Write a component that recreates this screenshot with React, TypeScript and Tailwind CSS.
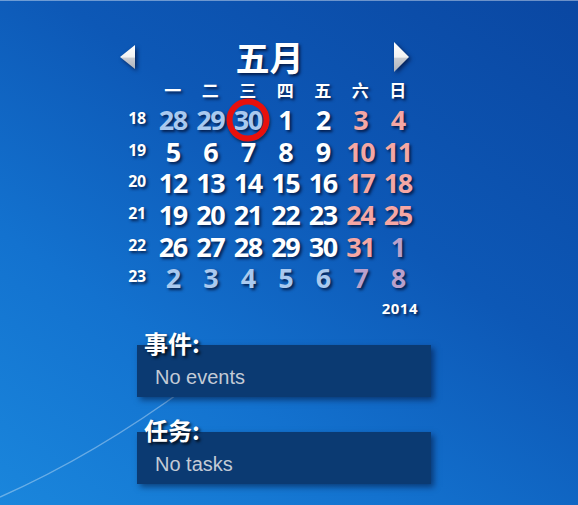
import React from "react";

type Cell = { d: string; c: string };

const W = "text-white";
const P = "text-[#f5a7a4]";
const B = "text-[#a9c9ef]";
const V = "text-[#b9a0cc]";

const rows: { wk: string; days: Cell[] }[] = [
  { wk: "18", days: [{ d: "28", c: B }, { d: "29", c: B }, { d: "30", c: B }, { d: "1", c: W }, { d: "2", c: W }, { d: "3", c: P }, { d: "4", c: P }] },
  { wk: "19", days: [{ d: "5", c: W }, { d: "6", c: W }, { d: "7", c: W }, { d: "8", c: W }, { d: "9", c: W }, { d: "10", c: P }, { d: "11", c: P }] },
  { wk: "20", days: [{ d: "12", c: W }, { d: "13", c: W }, { d: "14", c: W }, { d: "15", c: W }, { d: "16", c: W }, { d: "17", c: P }, { d: "18", c: P }] },
  { wk: "21", days: [{ d: "19", c: W }, { d: "20", c: W }, { d: "21", c: W }, { d: "22", c: W }, { d: "23", c: W }, { d: "24", c: P }, { d: "25", c: P }] },
  { wk: "22", days: [{ d: "26", c: W }, { d: "27", c: W }, { d: "28", c: W }, { d: "29", c: W }, { d: "30", c: W }, { d: "31", c: P }, { d: "1", c: V }] },
  { wk: "23", days: [{ d: "2", c: B }, { d: "3", c: B }, { d: "4", c: B }, { d: "5", c: B }, { d: "6", c: B }, { d: "7", c: V }, { d: "8", c: V }] },
];

const weekdays = ["一", "二", "三", "四", "五", "六", "日"];

function Arrow({ dir }: { dir: "left" | "right" }) {
  const id = dir === "left" ? "gl" : "gr";
  return (
    <svg width="20" height="32" viewBox="0 0 20 32" className="[filter:drop-shadow(2px_2px_2px_rgba(0,0,30,0.6))]">
      <defs>
        <linearGradient id={id} x1="0" y1="0" x2="0" y2="1">
          <stop offset="0" stopColor="#ffffff" />
          <stop offset="0.5" stopColor="#f2f2f2" />
          <stop offset="0.55" stopColor="#c9ccd2" />
          <stop offset="1" stopColor="#aeb3bb" />
        </linearGradient>
      </defs>
      {dir === "left" ? (
        <path d="M17 4 L17 28 L2 16 Z" fill={`url(#${id})`} />
      ) : (
        <path d="M3 1 L3 31 L18 16 Z" fill={`url(#${id})`} />
      )}
    </svg>
  );
}

const shadow = "[text-shadow:2px_2px_3px_rgba(0,10,40,0.75)]";
const cjk = "[font-family:'Noto_Sans_CJK_SC','Noto_Sans',sans-serif]";
const num = "[font-family:'Noto_Sans','DejaVu_Sans',sans-serif]";

export default function App() {
  return (
    <div className="relative w-[578px] h-[505px] overflow-hidden bg-[linear-gradient(215deg,#0a47a2_0%,#0d58b6_40%,#1372cf_70%,#1a86dc_100%)]">
      <div className="absolute inset-x-0 top-0 h-px bg-white/40" />
      <svg className="absolute left-0 top-0 pointer-events-none" width="578" height="505">
        <path d="M0 497 Q95 455 190 385" stroke="rgba(255,255,255,0.35)" strokeWidth="1.5" fill="none" />
      </svg>

      <div className="relative pl-[118px] pt-[36px]">
        {/* header */}
        <div className="flex w-[293px] items-center justify-between h-[42px]">
          <Arrow dir="left" />
          <div className={`${cjk} ${shadow} text-white text-[34px] font-bold leading-none ml-[10px]`}>五月</div>
          <Arrow dir="right" />
        </div>

        {/* weekday header */}
        <div className="grid grid-cols-[36px_repeat(7,37.5px)] h-[22px] items-center">
          <div />
          {weekdays.map((w) => (
            <div key={w} className={`${cjk} ${shadow} text-center text-white text-[17px] font-bold leading-none`}>
              {w}
            </div>
          ))}
        </div>

        {/* day rows */}
        <div className="flex flex-col pt-[4px]">
          {rows.map((r) => (
            <div key={r.wk} className="grid grid-cols-[36px_repeat(7,37.5px)] h-[31.6px] items-center">
              <div className={`${num} ${shadow} text-white text-[16px] font-bold leading-none text-center tracking-[-0.5px] pl-[2px] pb-[3px]`}>{r.wk}</div>
              {r.days.map((c, i) => (
                <div key={i} className="relative flex justify-center">
                  <span className={`${num} ${shadow} ${c.c} text-[27px] font-bold leading-none tracking-[-1.5px]`}>{c.d}</span>
                  {r.wk === "18" && i === 2 && (
                    <span className="absolute left-1/2 top-1/2 -translate-x-1/2 -translate-y-1/2 w-[43px] h-[43px] rounded-full border-[6px] border-[#e8100c] [box-shadow:1px_2px_3px_rgba(0,0,0,0.5)]" />
                  )}
                </div>
              ))}
            </div>
          ))}
        </div>

        <div className="flex w-[300px] justify-end mt-[7px]">
          <div className={`${num} ${shadow} text-white text-[15px] font-bold leading-none tracking-[0.5px]`}>2014</div>
        </div>

        {/* events */}
        <div className="mt-[15px] ml-[19px] flex flex-col w-[294px]">
          <div className={`relative z-10 ${cjk} text-white text-[24px] font-bold leading-[24px] pl-[7px] [text-shadow:2px_2px_3px_rgba(0,0,0,0.8)]`}>事件:</div>
          <div className="-mt-[10px] h-[52px] bg-[#0b3a72] [box-shadow:3px_3px_6px_rgba(0,10,40,0.5)] pl-[18px] pt-[22px]">
            <div className="[font-family:'Liberation_Sans',Arial,sans-serif] text-[20px] leading-[20px] text-[#c3cbd6]">No events</div>
          </div>

          <div className={`relative z-10 mt-[21px] ${cjk} text-white text-[24px] font-bold leading-[24px] pl-[7px] [text-shadow:2px_2px_3px_rgba(0,0,0,0.8)]`}>任务:</div>
          <div className="-mt-[10px] h-[52px] bg-[#0b3a72] [box-shadow:3px_3px_6px_rgba(0,10,40,0.5)] pl-[18px] pt-[22px]">
            <div className="[font-family:'Liberation_Sans',Arial,sans-serif] text-[20px] leading-[20px] text-[#c3cbd6]">No tasks</div>
          </div>
        </div>
      </div>
    </div>
  );
}
